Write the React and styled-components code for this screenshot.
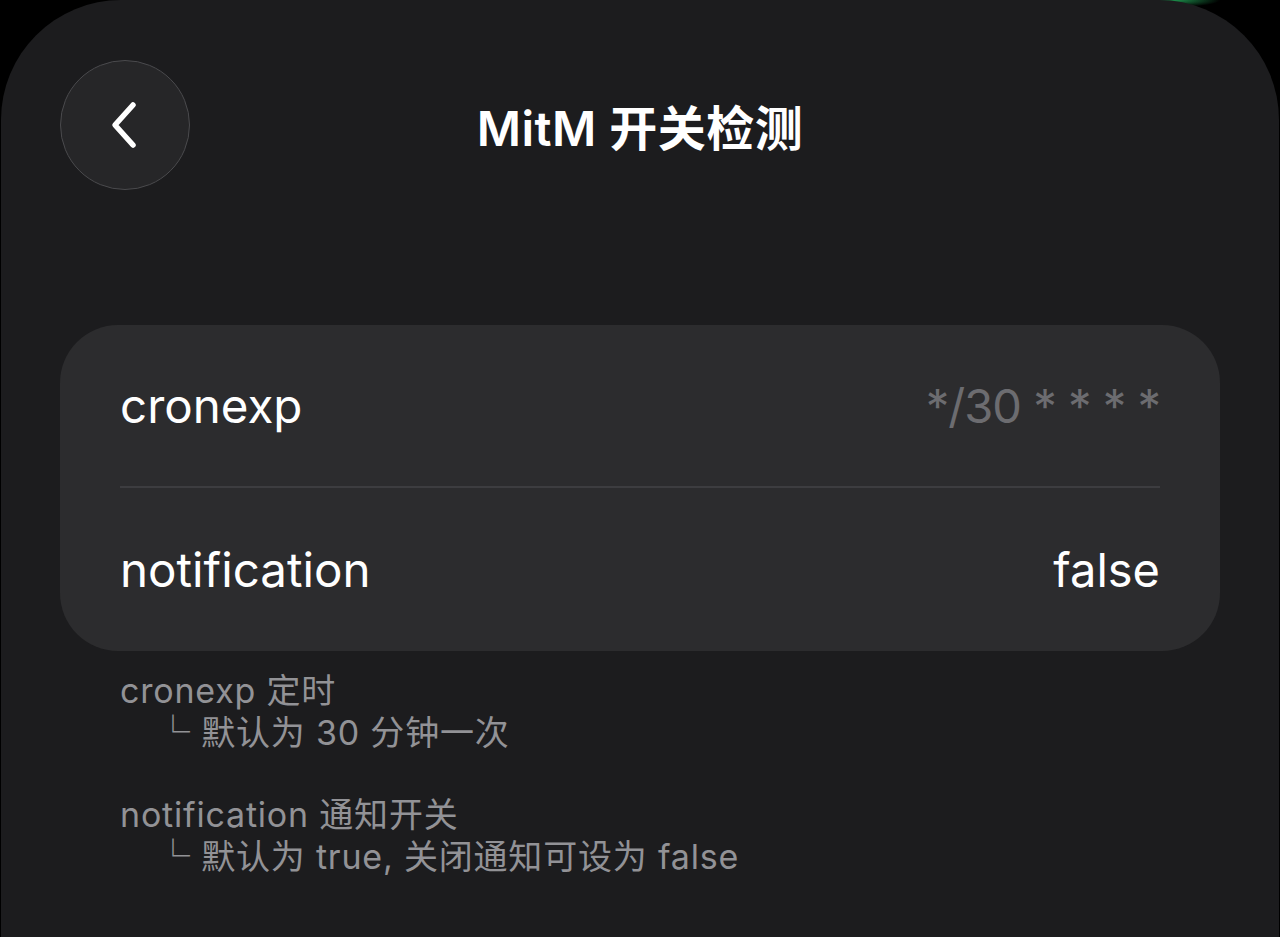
import React from 'react'
import styled, { createGlobalStyle } from 'styled-components'

const GlobalStyle = createGlobalStyle`
  html, body {
    margin: 0;
    padding: 0;
    background: #000 radial-gradient(ellipse 45px 7px at 1175px 0, #1d8f4c, transparent) no-repeat;
    font-family: "Inter", "Noto Sans CJK SC", sans-serif;
  }
`

const Sheet = styled.div`
  min-height: 937px;
  box-sizing: border-box;
  margin: 0 1px;
  background: #1c1c1e;
  border-radius: 120px 120px 0 0;
  padding: 60px 59px 0;
  display: flex;
  flex-direction: column;
`

const Header = styled.div`
  display: grid;
  grid-template-columns: 130px 1fr 130px;
  align-items: center;
  height: 130px;
`

const BackButton = styled.button`
  width: 130px;
  height: 130px;
  border-radius: 50%;
  background: #262628;
  border: 1.5px solid #4a4a4d;
  display: flex;
  align-items: center;
  justify-content: center;
  padding: 0;
`

const Title = styled.h1`
  margin: 0;
  text-align: center;
  color: #fff;
  font-size: 48px;
  font-weight: 600;
  letter-spacing: 0.5px;
`

const Card = styled.div`
  margin-top: 135px;
  background: #2c2c2e;
  border-radius: 58px;
  padding: 0 60px;
`

const Row = styled.div`
  display: flex;
  justify-content: space-between;
  align-items: center;
  height: ${p => p.h}px;
  border-bottom: ${p => (p.divider ? '2px solid #3d3d40' : 'none')};
`

const Label = styled.span`
  color: #fff;
  font-size: 47.5px;
  font-weight: 400;
`

const Value = styled.span`
  color: ${p => (p.placeholder ? '#6c6c70' : '#fff')};
  font-size: 47px;
  font-weight: 400;
  letter-spacing: ${p => (p.placeholder ? '-1px' : '0')};
`

const Notes = styled.div`
  padding: 19px 60px 0;
  display: flex;
  flex-direction: column;
  gap: 40px;
`

const NoteBlock = styled.div`
  display: flex;
  flex-direction: column;
`

const NoteLine = styled.div`
  color: #929296;
  font-size: 34px;
  line-height: 42px;
  letter-spacing: 0.8px;
  padding-left: ${p => (p.indent ? '36px' : '0')};
  white-space: pre;
`

function Chevron() {
  return (
    <svg width="30" height="48" viewBox="0 0 30 48" fill="none">
      <path d="M23 4 L5 24 L23 44" stroke="#fff" strokeWidth="5.5" strokeLinecap="round" strokeLinejoin="round" />
    </svg>
  )
}

export default function App() {
  return (
    <>
      <GlobalStyle />
      <Sheet>
        <Header>
          <BackButton aria-label="back">
            <Chevron />
          </BackButton>
          <Title>MitM 开关检测</Title>
          <div />
        </Header>
        <Card>
          <Row h={161} divider>
            <Label>cronexp</Label>
            <Value placeholder>*/30 * * * *</Value>
          </Row>
          <Row h={163}>
            <Label>notification</Label>
            <Value>false</Value>
          </Row>
        </Card>
        <Notes>
          <NoteBlock>
            <NoteLine>cronexp 定时</NoteLine>
            <NoteLine indent>└ 默认为 30 分钟一次</NoteLine>
          </NoteBlock>
          <NoteBlock>
            <NoteLine>notification 通知开关</NoteLine>
            <NoteLine indent>└ 默认为 true, 关闭通知可设为 false</NoteLine>
          </NoteBlock>
        </Notes>
      </Sheet>
    </>
  )
}
